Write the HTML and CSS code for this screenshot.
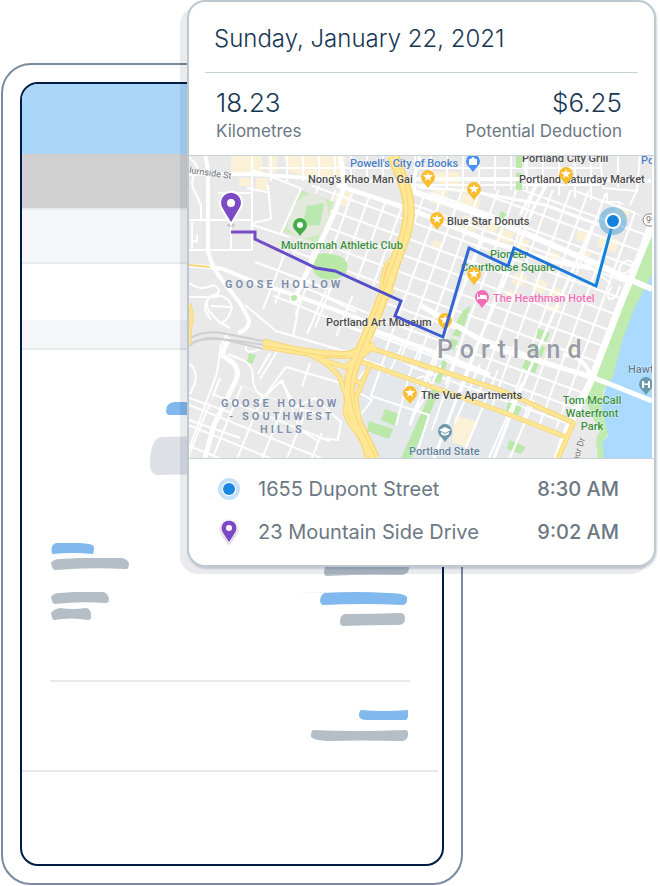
FILE: index.html
```html
<!DOCTYPE html>
<html lang="en">
<head>
  <meta charset="UTF-8" />
  <meta name="viewport" content="width=device-width, initial-scale=1.0"/>
  <title>Trip Summary</title>
  <link rel="stylesheet" href="styles.css">
</head>
<body>
  <main class="scene">

    <!-- Tablet behind the trip card -->
    <div class="tablet" aria-hidden="true">
      <div class="screen">
        <div class="bar bar-blue"></div>
        <div class="bar bar-grey"></div>
        <div class="bar bar-light"></div>
        <div class="bar bar-row"></div>

        <div class="intro">
          <svg class="blue" width="132" height="13" viewBox="0 0 132 13"><path d="M0 9Q0 1 8 0H124Q132 1 131 9L129 13H4Q0 13 0 9Z"/></svg>
          <svg class="pale" width="164" height="39" viewBox="0 0 164 39"><path d="M10 1Q80-1 155 1Q164 4 163 32Q163 38 157 38Q80 37 8 39Q2 39 0 31Q0 4 10 1Z"/></svg>
        </div>

        <div class="columns">
          <div class="stack">
            <div class="pair">
              <svg class="blue" width="43" height="11" viewBox="0 0 43 11"><path d="M5 0Q25-1 38 1Q44 2 43 6L42 11Q22 9 1 11Q-1 2 5 0Z"/></svg>
              <svg class="grey" width="78" height="12" viewBox="0 0 78 12"><path d="M1 4Q3 1 9 1Q40-1 71 0Q77 1 78 6Q78 11 75 11Q38 9 4 12Q1 12 0 4Z"/></svg>
            </div>
            <div class="pair">
              <svg class="grey" width="58" height="12" viewBox="0 0 58 12"><path d="M1 4Q3 1 9 1Q30-1 52 0Q57 1 58 7Q58 11 55 11Q28 9 4 12Q1 12 0 4Z"/></svg>
              <svg class="grey" width="40" height="12" viewBox="0 0 40 12"><path d="M1 4Q3 1 9 0Q22 2 35 0Q40 1 40 7Q41 12 37 12Q20 9 3 12Q1 12 0 4Z"/></svg>
            </div>
          </div>
          <div class="stack stack-right">
            <svg class="grey" width="85" height="14" viewBox="0 0 85 14"><path d="M2 1H81Q85 3 85 7Q84 13 76 13Q40 12 3 14Q0 14 0 10Z"/></svg>
            <div class="pair pair-right">
              <svg class="blue" width="113" height="13" viewBox="0 0 113 13"><path d="M0 0L27 1Q65-1 94 1Q110 1 113 5Q114 12 109 13Q70 11 29 13Q26 12 26 8Q27 2 31 1Z"/></svg>
              <svg class="grey" width="67" height="13" viewBox="0 0 67 13"><path d="M5 1Q34 1 61 0Q65 0 65 6Q65 12 57 12Q30 12 3 13Q0 13 0 9Q0 2 5 1Z"/></svg>
            </div>
          </div>
        </div>

        <div class="totals">
          <svg class="blue" width="49" height="10" viewBox="0 0 49 10"><path d="M2 0Q24 2 49 0Q50 10 46 10H8Q1 10 0 6Q0 1 2 0Z"/></svg>
          <svg class="grey" width="97" height="11" viewBox="0 0 97 11"><path d="M2 0Q45 2 95 0Q98 1 97 5Q96 11 91 11Q50 10 16 11Q0 10 0 6Q0 1 2 0Z"/></svg>
        </div>
      </div>
    </div>

    <!-- Trip card -->
    <article class="card">
      <h1 class="date">Sunday, January 22, 2021</h1>

      <div class="stats">
        <div class="stat">
          <strong>18.23</strong>
          <span>Kilometres</span>
        </div>
        <div class="stat stat-right">
          <strong>$6.25</strong>
          <span>Potential Deduction</span>
        </div>
      </div>

      <svg class="map" viewBox="189 156 463 302" preserveAspectRatio="xMidYMid slice" role="img" aria-label="Route through Portland">
        <defs>
          <pattern id="blocks" width="17" height="17" patternUnits="userSpaceOnUse" patternTransform="translate(592 377) rotate(20)">
            <path d="M0 1H17M1 0V17" class="street"/>
          </pattern>
          <pattern id="west" width="23" height="19" patternUnits="userSpaceOnUse" patternTransform="translate(213 393) rotate(22)">
            <path d="M0 1H23M1 0V19" class="street"/>
          </pattern>
          <pattern id="north" width="16" height="17" patternUnits="userSpaceOnUse" patternTransform="translate(414 184)">
            <path d="M0 1H16M1 0V17" class="street"/>
          </pattern>
          <linearGradient id="route" gradientUnits="userSpaceOnUse" x1="231" y1="0" x2="613" y2="0">
            <stop offset="0" stop-color="#7b4bc8"/>
            <stop offset=".42" stop-color="#4a50c9"/>
            <stop offset=".6" stop-color="#3066d6"/>
            <stop offset="1" stop-color="#0e84dd"/>
          </linearGradient>
          <g id="drop">
            <path d="M0 11Q-2 8-5 5A7 7 0 1 1 5 5Q2 8 0 11Z"/>
          </g>
          <g id="star">
            <use href="#drop" fill="#fbbc2d"/>
            <path fill="#fff" d="M0-5L1-2H5L2 1L3 4L0 2L-3 4L-2 1L-5-2H-1Z"/>
          </g>
        </defs>

        <rect x="189" y="156" width="463" height="302" fill="#e9e9e9"/>
        <path fill="#e4e8eb" d="M374 330L440 350L520 385L528 410L505 458H372L352 400L362 360Z"/>

        <!-- Commercial blocks -->
        <g fill="#faf1d8">
          <path d="M231 156H262V175H231ZM268 156H277V172H268ZM283 156H345V182L310 178L288 171ZM239 178H252V186H239ZM256 178H268V190H256ZM345 183L352 190L347 208L334 199Z"/>
          <path d="M434 172H460V188L434 182ZM435 187L448 192L442 207L430 202ZM451 172H460V187H451ZM463 193L482 199L477 212L458 206ZM464 215L480 221L475 233L460 227ZM487 218L500 223L495 234L482 229ZM434 240L444 243L440 250L431 247Z"/>
          <path d="M500 228L515 233L510 244L496 239ZM519 236L530 241L524 253L513 249ZM579 228L590 232L585 243L575 239ZM600 235L620 241L615 253L597 246ZM582 247L592 251L587 262L577 257ZM548 250L560 254L555 265L543 260ZM516 272L527 276L523 287L511 283ZM535 278L548 283L543 294L531 289ZM553 286L562 290L558 300L547 296ZM509 289L519 293L514 304L503 300ZM548 305H562L558 314L545 309Z"/>
          <path d="M616 206L630 210L626 221L612 217ZM455 415L478 422L466 447L452 442ZM568 341L582 346L578 356L566 352Z"/>
        </g>

        <!-- Street grids -->
        <path fill="url(#blocks)" d="M312 184L403 205L400 250L382 292L294 255L284 241Z"/>
        <path fill="url(#blocks)" d="M413 193L500 190H600L651 222L592 377L565 430L505 415L368 345L383 300L405 240Z"/>
        <path fill="url(#north)" d="M414 156H600V188L625 205L520 190H414ZM260 156H390V181H260Z"/>
        <path fill="url(#west)" d="M213 376L245 387L290 405L330 440V458H189V396L212 404Z"/>
        <path fill="url(#west)" d="M292 272L382 307L365 348L320 330L270 300Z"/>

        <!-- Parks and water -->
        <path fill="#aadaff" d="M652 265L625 330L608 380L601 405L608 436L602 443L604 458H652Z"/>
        <path fill="#c0ebae" d="M652 232V274L636 305L623 338L613 377L604 389L601 405L608 434L602 443L604 458H598Q594 435 600 432L583 396L591 379L622 307Z"/>
        <path fill="#cdeabd" d="M301 190L334 202L317 243L283 232Z"/>
        <path fill="#e3e9dc" d="M303 197Q317 187 327 203Q332 220 320 235L299 239L287 228Q291 205 303 197Z"/>
        <path fill="#b9e8b1" d="M307 206L324 203L320 225L302 226Z"/>
        <path fill="#b9e8a9" d="M314 256Q324 250 342 257Q351 263 345 275Q330 284 317 276Q309 269 314 256Z"/>
        <g fill="#b9e8a9">
          <path d="M463 311L471 305L464 326L456 323ZM457 327L463 329L459 337L452 335ZM451 338L458 341L454 350L448 348ZM443 360L447 362L440 384L434 381ZM432 389L439 391L412 458H401ZM385 409L399 414L395 426L381 420ZM369 421L393 429L389 439L367 431ZM538 328L550 333L546 342L536 338ZM532 343L545 347L542 357L530 352ZM526 358L539 363L535 373L522 368ZM508 402L522 407L518 415L506 411ZM509 440L526 447L521 454L507 449ZM249 353L256 355L252 364L247 362ZM516 156H522V168H516ZM516 173H522V190H516ZM501 211L507 214L503 219L499 217Z"/>
        </g>

        <!-- Minor roads -->
        <g class="road thin">
          <path d="M189 220H252V250H189M231 191V250M252 156V250M218 193H253M189 157L196 164L198 170Q190 177 193 188L201 205V219M192 222V250"/>
          <path d="M197 235V243M191 241H198M189 297H218M253 170L285 182L302 189M268 185L271 219L252 223M301 189L281 233M290 240L263 309M253 225L289 237M255 262L330 290M247 188L270 193"/>
          <path d="M189 283Q199 290 208 287L214 285Q222 290 217 294Q205 296 205 310L211 320M208 310Q204 294 217 295Q230 297 232 308Q226 325 219 322ZM211 306L231 307M219 322L230 328"/>
          <path d="M228 333L221 345L217 373L189 449M228 354L245 361Q254 367 253 380Q254 392 264 397L286 367L351 386M264 397L282 380L300 430L318 441L316 450M277 384Q282 380 286 389L296 407L315 398L341 422L338 440L318 438"/>
          <path d="M245 305L276 331L364 357M299 305L293 337M326 291L307 334M278 350L260 379M270 353L258 374M310 363L302 387M343 325L365 333M189 363Q198 371 195 383L190 394M247 345Q243 354 255 351L268 346M300 409L325 416M189 398L232 413M189 420L240 438"/>
          <path d="M356 312L320 294M346 354L385 367M365 370L352 389L372 400L359 417M387 350L371 396L429 415L418 450M403 344L388 375M421 344L409 376L396 425M441 365L428 392L414 415"/>
          <path d="M418 385Q414 379 420 377Q431 374 430 386M460 349L432 430M480 364L455 423M498 370L465 450M522 383L489 458M534 400L510 458"/>
          <path d="M623 263Q617 267 621 274Q633 272 633 263Q628 258 623 263ZM612 287Q606 293 609 299Q616 300 620 286M585 262L611 284M630 205L637 190L640 156M600 156L603 188L638 191M618 156V187"/>
        </g>

        <!-- Main roads -->
        <g class="road">
          <path d="M189 266Q211 266 223 269L257 283L300 297L365 321M189 174H255L346 181H402M402 179H520L651 181" stroke-width="4"/>
          <path d="M205 156Q208 163 208 181V249Q209 261 219 276L240 303L249 320Q249 330 238 333" stroke-width="4"/>
          <path d="M230 338Q222 350 223 356Q242 365 236 380L214 425L205 458" stroke-width="5"/>
          <path d="M346 181L336 209L315 255L293 302M340 156L345 185" stroke-width="5"/>
          <path d="M293 297Q298 295 298 299Q295 304 292 300Z" stroke-width="5"/>
          <path d="M337 185L412 210L483 239L548 260L591 268" stroke-width="5"/>
          <path d="M406 189L484 216L592 262L628 279L652 289" stroke-width="6"/>
          <path d="M372 330L450 358L490 375M420 305L495 348L555 366L592 377L652 401" stroke-width="5"/>
          <path d="M483 238L458 300L433 360L410 425M548 182L534 207L508 273L475 350L434 458M593 225L555 310L519 394L494 458" stroke-width="3"/>
          <path d="M652 226L620 305L590 383L569 425L557 458" stroke-width="7"/>
          <path d="M592 378Q583 354 563 355M592 378L605 383" stroke-width="4"/>
          <path d="M420 156L414 178L410 195M417 187L470 191L545 205L600 225M526 156V178L538 182L520 215" stroke-width="3"/>
        </g>
        <circle cx="294" cy="298" r="3" fill="#b9e8a9"/>

        <!-- Highways -->
        <g class="tunnel">
          <path d="M189 339Q202 330 222 333L263 341M189 346Q202 335 222 339L263 349M192 343Q206 334 263 345"/>
        </g>
        <path class="highway edge" stroke-width="4" d="M189 304Q194 315 190 328L189 345"/>
        <path class="highway" stroke-width="2" d="M189 304Q194 315 190 328L189 345"/>
        <path class="highway edge" stroke-width="2" d="M189 265L210 267"/>
        <g class="highway edge">
          <path stroke-width="12" d="M393 156Q399 170 406 190Q412 211 405 236Q395 260 388 285L372 324L354 366Q344 394 355 419L374 458"/>
          <path stroke-width="8" d="M263 345L292 350Q324 355 348 355L375 345"/>
          <path stroke-width="5" d="M263 341L300 350Q330 363 345 367L362 356M293 349Q324 357 339 376L348 400Q340 413 355 430L377 458M346 366L370 350M345 374L363 385M371 362L356 398L360 425L367 458"/>
          <path stroke-width="5" d="M370 348L500 390L574 423M362 362L500 411L566 437M574 422L558 458"/>
          <path stroke-width="4" d="M380 300Q382 262 391 260L401 260M377 310L393 290"/>
        </g>
        <g class="highway">
          <path stroke-width="9" d="M393 156Q399 170 406 190Q412 211 405 236Q395 260 388 285L372 324L354 366Q344 394 355 419L374 458"/>
          <path stroke-width="6" d="M263 345L292 350Q324 355 348 355L375 345"/>
          <path stroke-width="3" d="M263 341L300 350Q330 363 345 367L362 356M293 349Q324 357 339 376L348 400Q340 413 355 430L377 458M346 366L370 350M345 374L363 385M371 362L356 398L360 425L367 458"/>
          <path stroke-width="3" d="M370 348L500 390L574 423M362 362L500 411L566 437M574 422L558 458"/>
          <path stroke-width="2" d="M380 300Q382 262 391 260L401 260M377 310L393 290"/>
        </g>
        <path class="highway edge" stroke-width="1" d="M397 160Q407 184 408 206Q409 228 398 252L370 328L353 370Q346 394 357 420L376 458M263 346L292 350Q324 358 348 356"/>

        <!-- Labels -->
        <g class="place">
          <text x="308" y="183">Nong's Khao Man Gai</text>
          <text x="522" y="162">Portland City Grill</text>
          <text x="519" y="183">Portland Saturday Market</text>
          <text x="447" y="225">Blue Star Donuts</text>
          <text x="326" y="326">Portland Art Museum</text>
          <text x="421" y="399">The Vue Apartments</text>
        </g>
        <g class="place shop">
          <text x="350" y="167">Powell's City of Books</text>
          <text x="641" y="164">Po</text>
        </g>
        <g class="place park">
          <text x="281" y="249">Multnomah Athletic Club</text>
          <text x="490" y="258">Pioneer</text>
          <text x="461" y="271">Courthouse Square</text>
          <text x="592" y="404" text-anchor="middle">Tom McCall</text>
          <text x="592" y="417" text-anchor="middle">Waterfront</text>
          <text x="592" y="430" text-anchor="middle">Park</text>
        </g>
        <text class="place hotel" x="493" y="302">The Heathman Hotel</text>
        <g class="place civic">
          <text x="628" y="373">Hawt</text>
          <text x="409" y="455">Portland State</text>
        </g>
        <g class="area">
          <text x="225" y="288">GOOSE HOLLOW</text>
          <text x="221" y="407">GOOSE HOLLOW</text>
          <text x="229" y="420">- SOUTHWEST</text>
          <text x="260" y="433">HILLS</text>
        </g>
        <text class="city" x="437" y="358">Portland</text>
        <g class="road-name">
          <text transform="translate(189 173) rotate(8)">lurnside St</text>
          <text transform="translate(578 462) rotate(-73)">bor Dr</text>
        </g>
        <rect x="643" y="214" width="18" height="12" rx="6" fill="#fff" stroke="#888"/>
        <text class="road-name" x="646" y="223">99</text>

        <!-- Place markers -->
        <use href="#star" x="428" y="177"/>
        <use href="#star" x="474" y="189"/>
        <use href="#star" x="437" y="219"/>
        <use href="#star" x="474" y="274"/>
        <use href="#star" x="445" y="320"/>
        <use href="#star" x="410" y="393"/>
        <use href="#star" x="566" y="174"/>
        <use href="#drop" x="473" y="161" fill="#4a90f5"/>
        <path fill="#fff" d="M469 159H477V165H469ZM471 159Q473 155 475 159Z"/>
        <use href="#drop" x="482" y="297" fill="#f06eb5"/>
        <path fill="#fff" d="M477 294H478V297H480V295H486Q487 296 487 300H486V299H478V300H477Z"/>
        <use href="#drop" x="445" y="431" fill="#6b98ab"/>
        <path fill="#fff" d="M445 427L451 430L445 433L439 430ZM441 432L445 434L449 432V434Q445 437 441 434Z"/>
        <use href="#drop" x="646" y="384" fill="#6b98ab"/>
        <path fill="#fff" d="M642 381H644V383Q646 384 648 383V381H650V388H648V385H644V388H642Z"/>
        <use href="#drop" x="300" y="225" fill="#45ad48"/>
        <circle cx="300" cy="225" r="3" fill="#fff"/>

        <!-- Route -->
        <polyline class="route" points="231,232 255,232 255,239 316,268 335,271 401,301 395,316 443,337 469,248 508,266 514,248 596,286 613,222"/>
        <ellipse cx="231" cy="225" rx="4" ry="2" fill="#0002"/>
        <path d="M231 224Q226 216 222 209A11 11 0 1 1 240 209Q236 216 231 224Z" fill="#7d4ac6" stroke="#fff" stroke-width="2"/>
        <circle cx="231" cy="203" r="4" fill="#fff"/>
        <circle cx="613" cy="221" r="14" fill="#4fa4d9" fill-opacity=".55"/>
        <circle cx="613" cy="221" r="8" fill="#fff"/>
        <circle cx="613" cy="221" r="6" fill="#1183dc"/>
      </svg>

      <ul class="stops">
        <li>
          <svg width="24" height="24" viewBox="0 0 24 24" aria-hidden="true">
            <circle cx="12" cy="12" r="11" fill="#c5e0f8"/>
            <circle cx="12" cy="12" r="7" fill="#fff"/>
            <circle cx="12" cy="12" r="6" fill="#1b87df"/>
          </svg>
          <span>1655 Dupont Street</span>
          <time datetime="08:30">8:30 AM</time>
        </li>
        <li>
          <svg class="pin" width="24" height="28" viewBox="0 0 24 28" aria-hidden="true">
            <path d="M12 25Q8 19 5 14A8 8 0 1 1 19 14Q16 19 12 25Z" fill="#7d4ac6" stroke="#fff" stroke-width="1"/>
            <circle cx="12" cy="10" r="3" fill="#fff"/>
          </svg>
          <span>23 Mountain Side Drive</span>
          <time datetime="09:02">9:02 AM</time>
        </li>
      </ul>
    </article>

  </main>
</body>
</html>
```
FILE: styles.css
```css
* {
  box-sizing: border-box;
}

body {
  margin: 0;
  background-color: #fff;
  font-family: Inter, "Liberation Sans", sans-serif;
}

svg {
  display: block;
}

.scene {
  position: relative;
  padding-top: 63px;
}

/* Tablet */
.tablet {
  width: 70%;
  margin-left: 1px;
  padding: 17px;
  border: 2px solid #7b8a9f;
  border-radius: 30px;
}

.screen {
  border: 2px solid #001c42;
  border-radius: 18px;
  overflow: hidden;
  padding-bottom: 92px;
}

.bar {
  border-bottom: 2px solid #e6eaeb;
  background-color: #f4f6f8;
}

.bar-blue {
  height: 70px;
  border: 0;
  background-color: #aad7f9;
}

.bar-grey {
  height: 56px;
  background-color: #d0d0d0;
}

.bar-light {
  height: 54px;
}

.bar-row {
  height: 30px;
  margin-top: 56px;
}

.blue {
  fill: #81b8ee;
}

.grey {
  fill: #b3bec7;
}

.pale {
  fill: #dde1e7;
}

.intro {
  display: flex;
  flex-direction: column;
  align-items: center;
  gap: 21px;
  padding-top: 52px;
}

.columns {
  display: flex;
  justify-content: space-between;
  margin: 68px 32px 0 28px;
  padding: 0 1px 54px;
  border-bottom: 2px solid #e6eaeb;
}

.stack {
  display: flex;
  flex-direction: column;
  gap: 22px;
}

.stack-right {
  align-items: flex-end;
  gap: 16px;
  padding-top: 19px;
}

.pair {
  display: flex;
  flex-direction: column;
  gap: 4px;
}

.pair-right {
  align-items: flex-end;
  gap: 8px;
  padding-right: 2px;
}

.totals {
  display: flex;
  flex-direction: column;
  align-items: flex-end;
  gap: 10px;
  margin-right: 4px;
  padding: 28px 30px 29px;
  border-bottom: 2px solid #e6eaeb;
}

/* Trip card, lies over the tablet */
.card {
  position: absolute;
  top: 0;
  left: 187px;
  right: 4px;
  border: 2px solid #bdc8d0;
  border-radius: 18px;
  background-color: #fff;
  box-shadow: -7px 7px 0 rgba(20, 36, 80, 0.09), 1px 2px 2px rgba(40, 60, 80, 0.2);
  color: #6c7883;
}

.date {
  margin: 0 16px;
  padding: 20px 9px 17px;
  border-bottom: 1px solid #c6d1d8;
  color: #173753;
  font-size: 24px;
  font-weight: 300;
  line-height: 33px;
}

.stats {
  display: flex;
  justify-content: space-between;
  padding: 14px 32px 12px 27px;
  border-bottom: 1px solid #c6d1d8;
}

.stat {
  display: flex;
  flex-direction: column;
}

.stat-right {
  align-items: flex-end;
}

.stat strong {
  color: #173753;
  font-size: 26px;
  font-weight: 300;
  line-height: 32px;
}

.stat span {
  font-size: 17px;
  line-height: 24px;
}

.map {
  width: calc(100% - 2px);
  font-family: Roboto, "Liberation Sans", sans-serif;
}

.street {
  fill: none;
  stroke: #fff;
  stroke-width: 2;
}

.road {
  fill: none;
  stroke: #fff;
  stroke-linejoin: round;
}

.thin {
  stroke-width: 2;
}

.tunnel {
  fill: none;
  stroke: #cfcfcf;
  stroke-width: 2;
}

.highway {
  fill: none;
  stroke: #ffe794;
  stroke-linejoin: round;
}

.edge {
  stroke: #f7d777;
}

.place {
  fill: #4c4c4c;
  font-size: 11px;
  font-weight: 500;
}

.shop {
  fill: #4a7fc8;
}

.park {
  fill: #3b9040;
}

.hotel {
  fill: #ef70b6;
}

.civic {
  fill: #5f8298;
}

.place,
.area,
.city,
.road-name {
  paint-order: stroke;
  stroke: rgba(255, 255, 255, 0.6);
  stroke-width: 1px;
}

.area {
  fill: #7f8fab;
  font-size: 11px;
  font-weight: 700;
  letter-spacing: 3px;
}

.city {
  fill: #979ca8;
  font-size: 25px;
  font-weight: 500;
  letter-spacing: 7px;
}

.road-name {
  fill: #6a6f75;
  font-size: 9px;
}

.route {
  fill: none;
  stroke: url(#route);
  stroke-width: 3;
}

.stops {
  display: flex;
  flex-direction: column;
  gap: 15px;
  margin: 0;
  padding: 16px 35px 19px 28px;
  border-top: 1px solid #c6d1d8;
  list-style: none;
}

.stops li {
  display: flex;
  align-items: center;
  gap: 17px;
  height: 28px;
  font-size: 20px;
}

.stops time {
  margin-left: auto;
  font-weight: 500;
}

.pin {
  filter: drop-shadow(0 1px 1px rgba(0, 0, 0, 0.3));
}
```
